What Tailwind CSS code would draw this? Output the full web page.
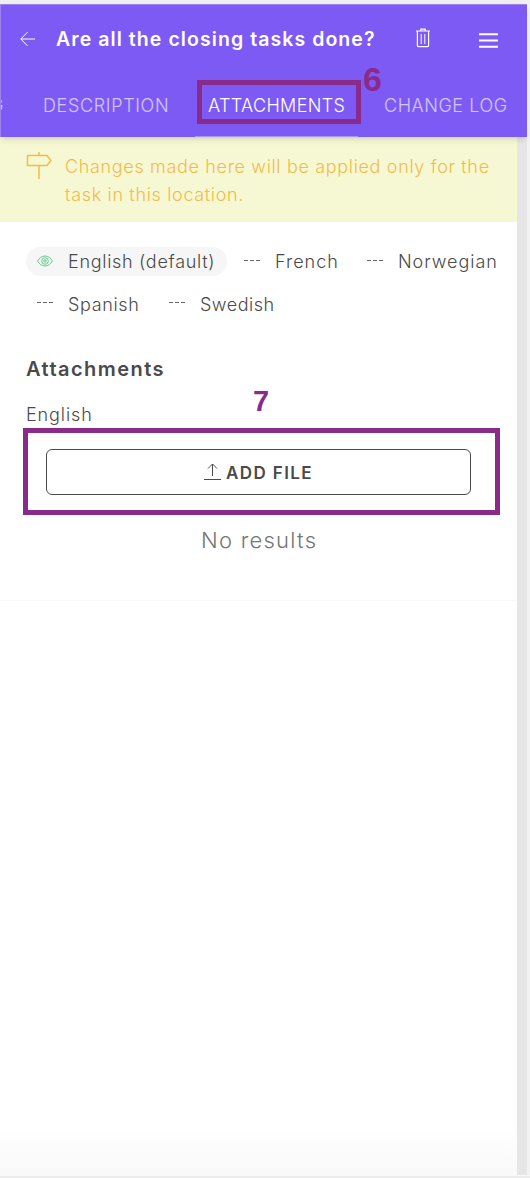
<!DOCTYPE html>
<html lang="en">
<head>
    <meta charset="UTF-8">
    <meta name="viewport" content="width=device-width, initial-scale=1.0">
    <title>Attachments</title>
    <script src="https://cdn.jsdelivr.net/npm/@tailwindcss/browser@4"></script>
</head>
<body class="bg-[#f2f2f2] font-['Inter',sans-serif] font-[350] text-[#4a4a4a] h-[1178px] overflow-hidden">
    <div class="relative w-[530px] h-[1178px] overflow-hidden border-t-4 border-[#efefef] flex flex-col">
        <!-- Header -->
        <header class="relative z-10 w-[527px] h-[133px] shrink-0 bg-[#7d5af3] border-t border-l border-[#9b82f0] text-white shadow-md">
            <div class="flex items-center h-[70px] pl-[19px]">
                <svg class="w-[15px] h-[16px] shrink-0 -mt-[3px]" viewBox="0 0 15 16" fill="none" stroke="currentColor" stroke-width="1"><path d="M7.500 1.200L.8 8l6.700 6.800M.8 8H15"/></svg>
                <h1 class="ml-[21px] w-[320px] text-[19.5px] font-semibold tracking-[1.07px] whitespace-nowrap">Are all the closing tasks done?</h1>
                <svg class="ml-[40px] w-[14px] h-[20px] shrink-0 -mt-[4px]" viewBox="0 0 14 20" fill="none" stroke="currentColor" stroke-width="1.2"><path d="M0 3h14M4.800 3V1.200h4.400V3M1.400 3v14.600c0 .7.4 1 1 1h9.200c.6 0 1-.3 1-1V3"/><path stroke-width="1" d="M5.200 6v10M8.800 6v10"/></svg>
                <svg class="ml-[49px] w-[19px] h-[15px] shrink-0" viewBox="0 0 19 15" stroke="currentColor" stroke-width="2"><path d="M0 1.200h19M0 7.500h19M0 13.800h19"/></svg>
            </div>
            <nav class="flex items-center h-[61px] overflow-hidden text-[18px] font-light whitespace-nowrap">
                <span class="w-[42px] shrink-0 flex text-white/65"><span class="-ml-[11px]">G</span></span>
                <span class="w-[165px] shrink-0 tracking-[0.65px] text-white/65">DESCRIPTION</span>
                <span class="w-[176px] shrink-0 tracking-[0.35px]">ATTACHMENTS</span>
                <span class="shrink-0 tracking-[0.55px] text-white/65">CHANGE LOG</span>
            </nav>
            <div class="absolute left-[194px] bottom-0 w-[163px] h-px bg-[#a996f5]"></div>
        </header>

        <div class="flex w-[527px] h-[1038px] shrink-0">
            <main class="w-[517px] bg-linear-to-b from-white from-95% to-[#f9f9f9]">
                <!-- Location notice -->
                <div class="flex h-[85px] bg-[#f6f8d3] pt-4 pl-[26px] text-[#f3bb49]">
                    <svg class="w-[26px] h-[28px] shrink-0 -mt-[2px]" viewBox="0 0 26 28" fill="none" stroke="currentColor" stroke-width="1.5"><path d="M1.500 4.500h19.500l3.800 5-3.800 5H1.500zM13 1v3.500M13 14.500V28"/></svg>
                    <p class="ml-[13px] text-[18px] leading-7 tracking-[0.66px] whitespace-nowrap">Changes made here will be applied only for the<br>task in this location.</p>
                </div>

                <div class="h-[379px] pt-[25px] pl-[26px] border-b border-[#fafafa] flex flex-col items-start">
                    <!-- Languages -->
                    <div class="flex h-[29px] items-center text-[18px] whitespace-nowrap">
                        <span class="flex items-center w-[201px] h-[29px] rounded-full bg-[#f6f6f6] pl-[11px] mr-[17px]">
                            <svg class="w-4 h-3 mr-[15px] -mt-[2px] shrink-0 text-[#65ca90]" viewBox="0 0 16 12" fill="none" stroke="currentColor" stroke-width="1"><path d="M.6 6C2.500 2.700 5 1 8 1s5.500 1.700 7.400 5C13.500 9.300 11 11 8 11S2.500 9.300.6 6z"/><circle cx="8" cy="6" r="3.300"/><circle cx="8" cy="6" r="1.200"/></svg>
                            <span class="tracking-[0.7px]">English (default)</span>
                        </span>
                        <svg class="w-4 h-px mr-[15px] -mt-[3px] shrink-0" viewBox="0 0 16 1" fill="#666"><path d="M0 0h4v1H0zM6 0h4v1H6zM12 0h4v1h-4z"/></svg>
                        <span class="w-[92px] tracking-[1px]">French</span>
                        <svg class="w-4 h-px mr-[15px] -mt-[3px] shrink-0" viewBox="0 0 16 1" fill="#666"><path d="M0 0h4v1H0zM6 0h4v1H6zM12 0h4v1h-4z"/></svg>
                        <span class="tracking-[0.95px]">Norwegian</span>
                    </div>
                    <div class="flex h-[29px] mt-[14px] pl-[11px] items-center text-[18px] whitespace-nowrap">
                        <svg class="w-4 h-px mr-[15px] -mt-[5px] shrink-0" viewBox="0 0 16 1" fill="#666"><path d="M0 0h4v1H0zM6 0h4v1H6zM12 0h4v1h-4z"/></svg>
                        <span class="w-[101px] tracking-[0.65px]">Spanish</span>
                        <svg class="w-4 h-px mr-[15px] -mt-[5px] shrink-0" viewBox="0 0 16 1" fill="#666"><path d="M0 0h4v1H0zM6 0h4v1H6zM12 0h4v1h-4z"/></svg>
                        <span class="tracking-[0.5px]">Swedish</span>
                    </div>

                    <!-- Attachments -->
                    <h2 class="mt-9 h-7 leading-7 text-[20px] font-semibold tracking-[1.45px]">Attachments</h2>
                    <p class="mt-[18px] h-7 leading-7 text-[18px] tracking-[0.9px]">English</p>
                    <button class="mt-5 ml-5 w-[425px] h-[46px] shrink-0 rounded-md border border-[#4a4a4a] bg-white flex items-center justify-center gap-[5px] text-[17px] font-semibold tracking-[1.4px]">
                        <svg class="w-[17px] h-[18px] shrink-0" viewBox="0 0 17 18" fill="none" stroke="currentColor" stroke-width="1"><path d="M8.500 13V1M4 5.500L8.500 1 13 5.500M0 16.500h17"/></svg>
                        <span class="pt-[3px]">ADD FILE</span>
                    </button>
                    <p class="mt-[29px] ml-[175px] h-8 leading-8 text-[22px] font-light tracking-[1.25px] whitespace-nowrap text-[#757575]">No results</p>
                </div>
            </main>
            <div class="w-[10px] bg-[#e6e6e6]"></div>
        </div>
        <div class="h-px shrink-0 bg-[#f9f9f9]"></div>
        <div class="h-[2px] shrink-0 bg-[#ececec]"></div>

        <!-- Callouts -->
        <div class="absolute z-20 left-[197px] top-[76px] w-[164px] h-[44px] border-5 border-[#8a2b8b]"></div>
        <div class="absolute z-20 left-[363px] top-[58px] leading-[35px] text-[34px] font-bold font-['Liberation_Sans',sans-serif] text-[#8a2b8b]">6</div>
        <div class="absolute z-20 left-[23px] top-[424px] w-[477px] h-[87px] border-5 border-[#8a2b8b]"></div>
        <div class="absolute z-20 left-[253px] top-[380px] leading-[35px] text-[29px] font-bold font-['Liberation_Sans',sans-serif] text-[#8a2b8b]">7</div>
    </div>
</body>
</html>
